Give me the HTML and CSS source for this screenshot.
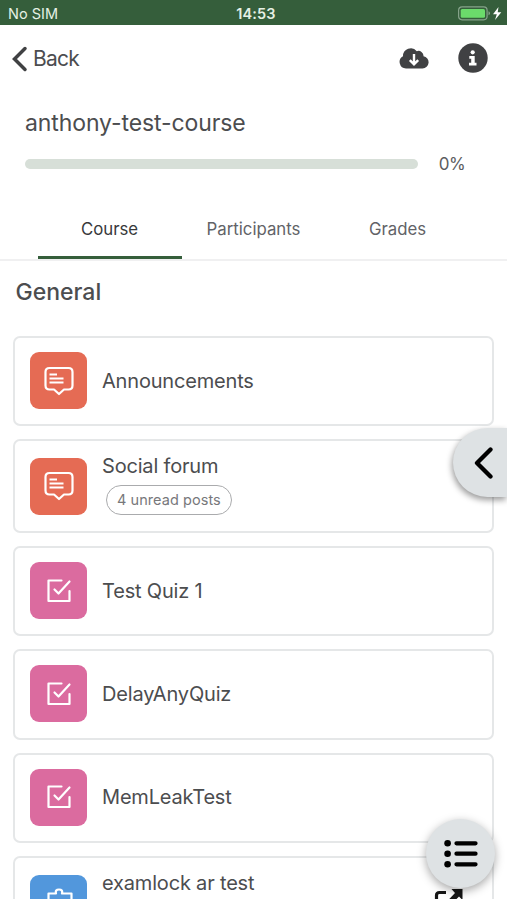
FILE: index.html
```html
<!DOCTYPE html>
<html lang="en">
<head>
    <meta charset="UTF-8">
    <meta name="viewport" content="width=device-width, initial-scale=1.0">
    <title>anthony-test-course</title>
    <link rel="stylesheet" href="styles.css">
</head>
<body>
    <!-- shared activity icons -->
    <svg class="icon-defs" width="0" height="0">
        <symbol id="icon-forum" viewBox="0 0 30 30">
            <path d="M5.5 2H24.5Q28.5 2 28.5 6V19.5Q28.5 23.5 24.5 23.5H20L15 28L10 23.5H5.5Q1.5 23.5 1.5 19.5V6Q1.5 2 5.5 2Z" stroke-width="2.2"/>
            <path d="M5.5 8.5H13M5.5 12.5H19.5M5.5 16.5H19.5" stroke-width="2.1" stroke-linecap="butt"/>
        </symbol>
        <symbol id="icon-quiz" viewBox="0 0 30 30">
            <path d="M17.5 4.5H4.5V25H25.5V15" stroke-width="2.2"/>
            <path d="M10.5 13.5L14.5 17.5L25.5 5.5" stroke-width="2.2"/>
        </symbol>
        <symbol id="icon-lti" viewBox="0 0 30 30">
            <path d="M4.5 28V5.5H12Q11 1.5 15 1.5T18 5.5H27.5V28" stroke-width="2.2"/>
        </symbol>
    </svg>

    <div class="screen">
        <div class="status-bar">
            <span class="carrier">No SIM</span>
            <span class="clock">14:53</span>
            <svg class="battery" width="44" height="16" viewBox="0 0 44 16">
                <rect x="0.6" y="0.8" width="28.5" height="13" rx="3.5" fill="none" stroke="#86a38a" stroke-width="1.2"/>
                <rect x="2.7" y="2.9" width="24.3" height="8.8" rx="1.5" fill="#6bdb6b"/>
                <path d="M30.5 5.3Q32 5.8 32 7.3T30.5 9.3Z" fill="#86a38a"/>
                <path d="M40.5 1L35 8.2H38.8L37 14L43.3 6.3H39.7Z" fill="#fff"/>
            </svg>
        </div>

        <div class="toolbar">
            <a class="back">
                <svg width="17" height="26" viewBox="0 0 17 26"><path d="M14 2.5L3.5 13L14 23.5"/></svg>
                <span>Back</span>
            </a>
            <div class="toolbar-actions">
                <svg width="30" height="22" viewBox="0 0 30 22">
                    <path d="M7 21.5A6.5 6.5 0 0 1 4 9.3A7.8 7.8 0 0 1 17.8 4.2A5 5 0 0 1 24.5 9.2A6.2 6.2 0 0 1 23.5 21.5Z" fill="#404143"/>
                    <path d="M15 7V17M10.8 13.2L15 17.4L19.2 13.2" fill="none" stroke="#fff" stroke-width="2.4"/>
                </svg>
                <svg width="30" height="30" viewBox="0 0 30 30">
                    <circle cx="15" cy="15" r="14.7" fill="#404143"/>
                    <circle cx="14.7" cy="9.3" r="2.1" fill="#fff"/>
                    <path d="M11.3 13.1H16.7V19.8H18.5V22.5H11V19.8H13.2V15.7H11.3Z" fill="#fff"/>
                </svg>
            </div>
        </div>

        <div class="course-header">
            <h1>anthony-test-course</h1>
            <div class="progress">
                <div class="progress-track"></div>
                <span class="progress-value">0%</span>
            </div>
        </div>

        <div class="tabs">
            <div class="tab active"><span>Course</span></div>
            <div class="tab"><span>Participants</span></div>
            <div class="tab"><span>Grades</span></div>
        </div>

        <div class="content">
            <h2>General</h2>
            <div class="activity">
                <div class="activity-icon forum"><svg width="30" height="30"><use href="#icon-forum"/></svg></div>
                <span class="name">Announcements</span>
            </div>
            <div class="activity tall">
                <div class="activity-icon forum"><svg width="30" height="30"><use href="#icon-forum"/></svg></div>
                <div class="details">
                    <span class="name">Social forum</span>
                    <span class="unread">4 unread posts</span>
                </div>
            </div>
            <div class="activity">
                <div class="activity-icon quiz"><svg width="30" height="30"><use href="#icon-quiz"/></svg></div>
                <span class="name">Test Quiz 1</span>
            </div>
            <div class="activity">
                <div class="activity-icon quiz"><svg width="30" height="30"><use href="#icon-quiz"/></svg></div>
                <span class="name">DelayAnyQuiz</span>
            </div>
            <div class="activity">
                <div class="activity-icon quiz"><svg width="30" height="30"><use href="#icon-quiz"/></svg></div>
                <span class="name">MemLeakTest</span>
            </div>
            <div class="activity last">
                <div class="activity-icon lti"><svg width="30" height="30"><use href="#icon-lti"/></svg></div>
                <span class="name">examlock ar test</span>
                <svg class="launch" width="30" height="30" viewBox="0 0 30 30">
                    <path d="M12 4.5H5.5Q2.5 4.5 2.5 7.5V24.5Q2.5 27.5 5.5 27.5H22.5Q25.5 27.5 25.5 24.5V18" fill="none" stroke="#161616" stroke-width="3.2"/>
                    <path d="M17.5 1H28.5V12L25 8.5L14.5 19L11 15.5L21 5Z" fill="#161616"/>
                </svg>
            </div>
        </div>

        <button class="drawer-toggle">
            <svg width="20" height="34" viewBox="0 0 20 34"><path d="M16.5 3.5L3 17L16.5 30.5"/></svg>
        </button>
        <button class="index-button">
            <svg width="34" height="28" viewBox="0 0 34 28">
                <g fill="#000" stroke="none"><circle cx="3.6" cy="3.3" r="3.3"/><circle cx="3.6" cy="13.7" r="3.3"/><circle cx="3.6" cy="24.3" r="3.3"/></g>
                <path d="M12.5 3.3H31.5M12.5 13.7H31.5M12.5 24.3H31.5"/>
            </svg>
        </button>
    </div>
</body>
</html>
```

FILE: styles.css
```css
* {
    box-sizing: border-box;
}
body {
    margin: 0;
    font-family: Inter, "Liberation Sans", sans-serif;
    background: #fff;
    color: #4c4d4f;
}
h1, h2 {
    margin: 0;
    font-weight: 400;
}
.icon-defs {
    position: absolute;
}
.screen {
    position: relative;
    width: 507px;
    height: 899px;
    overflow: hidden;
}

/* status bar */
.status-bar {
    display: grid;
    grid-template-columns: 1fr auto 1fr;
    align-items: center;
    height: 25px;
    padding: 2px 5px 0 8px;
    background: #355e3b;
    color: #e5f0e4;
    font-size: 14.5px;
}
.clock {
    font-weight: 600;
    padding-left: 2px;
    letter-spacing: 0.1px;
}
.battery {
    justify-self: end;
}

/* toolbar */
.toolbar {
    display: flex;
    justify-content: space-between;
    align-items: center;
    height: 67px;
    padding: 0 19px 0 11px;
}
.back {
    display: flex;
    align-items: center;
    gap: 5px;
    font-size: 21px;
    letter-spacing: -0.8px;
}
.back svg {
    fill: none;
    stroke: #404143;
    stroke-width: 3.5;
    stroke-linecap: round;
}
.toolbar-actions {
    display: flex;
    align-items: center;
    gap: 29px;
    padding-bottom: 1px;
}

/* course name and progress */
.course-header {
    padding: 15px 42px 0 25px;
    height: 108px;
}
h1 {
    font-size: 23px;
    line-height: 32px;
    letter-spacing: -0.1px;
}
.progress {
    display: flex;
    align-items: center;
    justify-content: space-between;
    height: 22px;
    margin-top: 14px;
}
.progress-track {
    width: 393px;
    height: 10px;
    border-radius: 5px;
    background: #d7dfd8;
}
.progress-value {
    font-size: 17px;
    letter-spacing: -0.6px;
    color: #5c5d60;
}

.tabs {
    display: flex;
    height: 61px;
    padding: 0 37.5px;
    border-bottom: 2px solid #f0f0f1;
}
.tab {
    width: 144.3px;
    height: 59px;
    padding-top: 18px;
    text-align: center;
    font-size: 16.8px;
    line-height: 22px;
    color: #626367;
}
.tab.active {
    color: #38393b;
    border-bottom: 3px solid #355e3b;
}

/* activities */
.content {
    display: flex;
    flex-direction: column;
    gap: 13px;
    padding: 15px 13px 0;
}
h2 {
    margin-left: 2.5px;
    height: 47px;
    font-size: 23px;
    line-height: 32px;
    font-weight: 450;
}
.activity {
    display: flex;
    align-items: center;
    gap: 15px;
    flex: none;
    height: 90.2px;
    padding: 0 15px 1px;
    border: 2px solid #e5e7e8;
    border-radius: 7px;
}
.activity.tall {
    height: 94px;
    padding-bottom: 0;
}
.activity-icon {
    display: flex;
    align-items: center;
    justify-content: center;
    width: 57px;
    height: 57px;
    border-radius: 9px;
}
.activity-icon svg {
    fill: none;
    stroke: #fff;
    stroke-linecap: round;
    stroke-linejoin: round;
}
.forum {
    background: #e56b54;
}
.quiz {
    background: #db6b9f;
}
.lti {
    background: #5297dc;
}
.name {
    font-size: 20px;
    line-height: 26px;
    letter-spacing: -0.18px;
}
.details {
    display: flex;
    flex-direction: column;
    gap: 6px;
    margin-top: -5px;
}
.unread {
    margin-left: 4px;
    height: 30px;
    padding: 0 10px;
    border: 1.5px solid #aaabad;
    border-radius: 15px;
    font-size: 14.5px;
    line-height: 28px;
    letter-spacing: 0.06px;
    color: #77787b;
}
.activity.last {
    align-items: flex-start;
    height: 110px;
    padding-top: 17px;
}
.last .name {
    margin-top: -5px;
}
.launch {
    margin: 13px 13px 0 auto;
}

/* floating buttons */
.drawer-toggle {
    position: absolute;
    top: 428px;
    right: 0;
    display: flex;
    align-items: center;
    width: 54px;
    height: 69px;
    padding: 0 0 0 20.5px;
    border: 0;
    border-radius: 35px 0 0 35px;
    background: #dee2e4;
    box-shadow: -1px 3px 6px rgba(0,0,0,0.4);
}
.drawer-toggle svg,
.index-button svg {
    fill: none;
    stroke: #000;
    stroke-width: 4.3;
    stroke-linecap: round;
    stroke-linejoin: round;
}
.index-button {
    position: absolute;
    top: 819px;
    left: 426px;
    display: flex;
    align-items: center;
    justify-content: center;
    width: 69px;
    height: 69px;
    padding: 0;
    border: 0;
    border-radius: 50%;
    background: #dee2e4;
    box-shadow: 0 3px 10px rgba(0,0,0,0.35);
}
```
